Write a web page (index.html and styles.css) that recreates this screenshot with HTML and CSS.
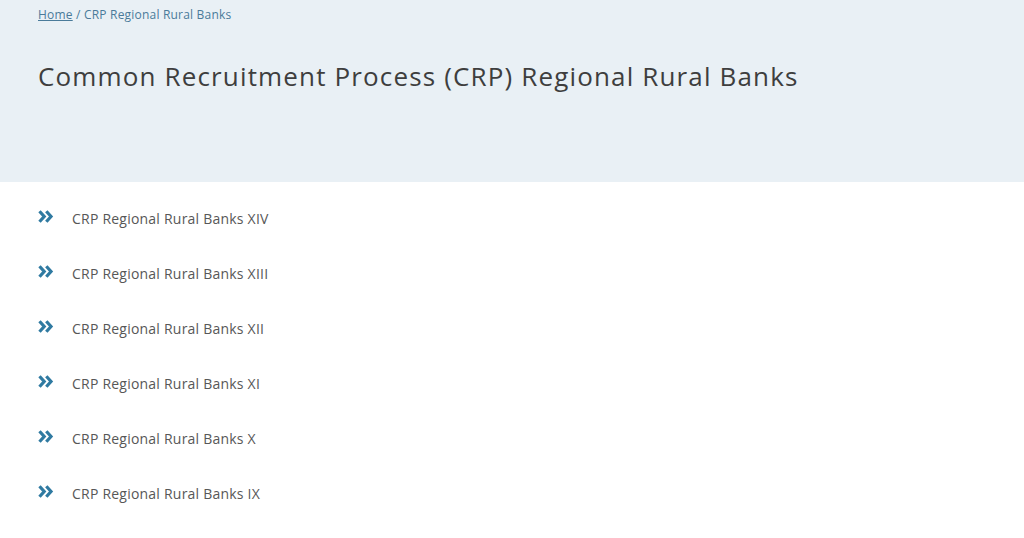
FILE: index.html
```html
<!DOCTYPE html>
<html>
<head>
<meta charset="utf-8">
<link rel="stylesheet" href="styles.css">
</head>
<body>
<header class="hero">
  <nav class="crumbs"><a href="#">Home</a> / CRP Regional Rural Banks</nav>
  <h1 class="title">Common Recruitment Process (CRP) Regional Rural Banks</h1>
</header>
<main class="content">
  <ul class="list">
    <li class="item"><svg class="ico" viewBox="0 0 16 13"><path d="M1.5 1.3 L6.2 6.5 L1.5 11.7 M8.3 1.3 L13 6.5 L8.3 11.7"/></svg><span>CRP Regional Rural Banks XIV</span></li>
    <li class="item"><svg class="ico" viewBox="0 0 16 13"><path d="M1.5 1.3 L6.2 6.5 L1.5 11.7 M8.3 1.3 L13 6.5 L8.3 11.7"/></svg><span>CRP Regional Rural Banks XIII</span></li>
    <li class="item"><svg class="ico" viewBox="0 0 16 13"><path d="M1.5 1.3 L6.2 6.5 L1.5 11.7 M8.3 1.3 L13 6.5 L8.3 11.7"/></svg><span>CRP Regional Rural Banks XII</span></li>
    <li class="item"><svg class="ico" viewBox="0 0 16 13"><path d="M1.5 1.3 L6.2 6.5 L1.5 11.7 M8.3 1.3 L13 6.5 L8.3 11.7"/></svg><span>CRP Regional Rural Banks XI</span></li>
    <li class="item"><svg class="ico" viewBox="0 0 16 13"><path d="M1.5 1.3 L6.2 6.5 L1.5 11.7 M8.3 1.3 L13 6.5 L8.3 11.7"/></svg><span>CRP Regional Rural Banks X</span></li>
    <li class="item"><svg class="ico" viewBox="0 0 16 13"><path d="M1.5 1.3 L6.2 6.5 L1.5 11.7 M8.3 1.3 L13 6.5 L8.3 11.7"/></svg><span>CRP Regional Rural Banks IX</span></li>
  </ul>
</main>
</body>
</html>
```
FILE: styles.css
```css
* { box-sizing: border-box; }
html, body { margin: 0; padding: 0; background: #fff; }
body { font-family: "Open Sans", Lato, sans-serif; }
.hero {
  background: #e9f0f5;
  height: 182px;
  padding: 6px 38px 0;
}
.crumbs {
  font-size: 12px;
  letter-spacing: 0.2px;
  color: #4a7b9a;
  line-height: 18px;
}
.crumbs a { color: #4a7b9a; text-decoration: underline; }
.title {
  margin: 36px 0 0;
  font-weight: 400;
  font-size: 26px;
  letter-spacing: 1.15px;
  line-height: 32px;
  color: #3e3e3e;
}
.content { padding: 28px 38px 0; }
.list { list-style: none; margin: 0; padding: 0; display: flex; flex-direction: column; gap: 37px; }
.item {
  display: flex;
  align-items: center;
  gap: 18px;
  font-size: 14px;
  letter-spacing: 0.22px;
  line-height: 18px;
  color: #575757;
}
.ico {
  flex: none;
  width: 16px; height: 13px;
  fill: none;
  stroke: #2f7aa1;
  stroke-width: 3.2;
  stroke-linecap: butt;
  stroke-linejoin: miter;
  margin-top: -6px;
}
```
